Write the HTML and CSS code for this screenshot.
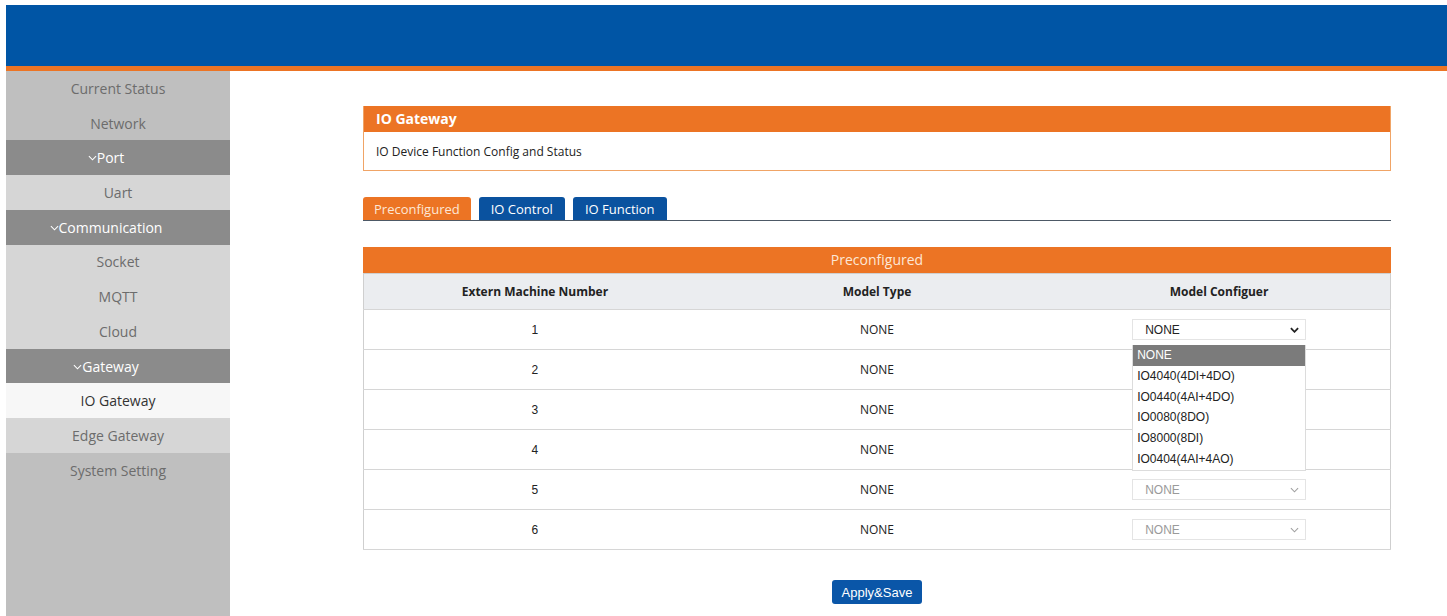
FILE: index.html
```html
<!DOCTYPE html>
<html lang="en">
<head>
<meta charset="utf-8">
<title>IO Gateway</title>
<link rel="stylesheet" href="styles.css">
</head>
<body>
<div class="topbar"></div>
<div class="layout">
  <nav class="sidebar">
    <a class="nav-item top">Current Status</a>
    <a class="nav-item top">Network</a>
    <a class="nav-item group"><svg class="caret" viewBox="0 0 10 6" width="9" height="6"><polyline points="1,1 5,5 9,1" fill="none" stroke="currentColor" stroke-width="1.2"/></svg>Port</a>
    <a class="nav-item sub">Uart</a>
    <a class="nav-item group"><svg class="caret" viewBox="0 0 10 6" width="9" height="6"><polyline points="1,1 5,5 9,1" fill="none" stroke="currentColor" stroke-width="1.2"/></svg>Communication</a>
    <a class="nav-item sub">Socket</a>
    <a class="nav-item sub">MQTT</a>
    <a class="nav-item sub">Cloud</a>
    <a class="nav-item group"><svg class="caret" viewBox="0 0 10 6" width="9" height="6"><polyline points="1,1 5,5 9,1" fill="none" stroke="currentColor" stroke-width="1.2"/></svg>Gateway</a>
    <a class="nav-item sub active">IO Gateway</a>
    <a class="nav-item sub">Edge Gateway</a>
    <a class="nav-item top">System Setting</a>
  </nav>

  <main class="content">
    <section class="panel">
      <h2 class="panel-title">IO Gateway</h2>
      <p class="panel-body">IO Device Function Config and Status</p>
    </section>

    <div class="tabs">
      <span class="tab current">Preconfigured</span>
      <span class="tab">IO Control</span>
      <span class="tab">IO Function</span>
    </div>

    <table class="grid">
      <caption>Preconfigured</caption>
      <thead>
        <tr><th>Extern Machine Number</th><th>Model Type</th><th>Model Configuer</th></tr>
      </thead>
      <tbody>
        <tr>
          <td class="num">1</td><td>NONE</td>
          <td>
            <div class="pick-wrap">
              <div class="pick open">NONE<svg class="chev" viewBox="0 0 10 6" width="9" height="6"><polyline points="1,1 5,5 9,1" fill="none" stroke="currentColor" stroke-width="2"/></svg></div>
              <ul class="options">
                <li class="hl">NONE</li>
                <li>IO4040(4DI+4DO)</li>
                <li>IO0440(4AI+4DO)</li>
                <li>IO0080(8DO)</li>
                <li>IO8000(8DI)</li>
                <li>IO0404(4AI+4AO)</li>
              </ul>
            </div>
          </td>
        </tr>
        <tr><td class="num">2</td><td>NONE</td><td><div class="pick off covered">NONE<svg class="chev" viewBox="0 0 10 6" width="9" height="6"><polyline points="1,1 5,5 9,1" fill="none" stroke="currentColor" stroke-width="1.2"/></svg></div></td></tr>
        <tr><td class="num">3</td><td>NONE</td><td><div class="pick off covered">NONE<svg class="chev" viewBox="0 0 10 6" width="9" height="6"><polyline points="1,1 5,5 9,1" fill="none" stroke="currentColor" stroke-width="1.2"/></svg></div></td></tr>
        <tr><td class="num">4</td><td>NONE</td><td><div class="pick off covered">NONE<svg class="chev" viewBox="0 0 10 6" width="9" height="6"><polyline points="1,1 5,5 9,1" fill="none" stroke="currentColor" stroke-width="1.2"/></svg></div></td></tr>
        <tr><td class="num">5</td><td>NONE</td><td><div class="pick off">NONE<svg class="chev" viewBox="0 0 10 6" width="9" height="6"><polyline points="1,1 5,5 9,1" fill="none" stroke="currentColor" stroke-width="1.2"/></svg></div></td></tr>
        <tr><td class="num">6</td><td>NONE</td><td><div class="pick off">NONE<svg class="chev" viewBox="0 0 10 6" width="9" height="6"><polyline points="1,1 5,5 9,1" fill="none" stroke="currentColor" stroke-width="1.2"/></svg></div></td></tr>
      </tbody>
    </table>

    <div class="actions">
      <button class="btn" type="button">Apply&amp;Save</button>
    </div>
  </main>
</div>
</body>
</html>
```
FILE: styles.css
```css
html, body {
  margin: 0;
  height: 100%;
  background: #fff;
}

body {
  padding: 5px 0 0 6px;
  box-sizing: border-box;
  font-family: "Open Sans", "Noto Sans", sans-serif;
  overflow: hidden;
}

/* header band */
.topbar {
  height: 61px;
  background: #0055a5;
  border-bottom: 5px solid #ec7424;
}

.layout {
  display: flex;
  height: calc(100% - 66px);
}

/* left navigation */
.sidebar {
  width: 224px;
  flex: none;
  background: #bfbfbf;
  display: flex;
  flex-direction: column;
}

.nav-item {
  display: flex;
  align-items: center;
  justify-content: center;
  height: 34.73px;
  font-size: 14px;
  color: #6c6c6c;
  cursor: pointer;
}

.nav-item.top { background: #bfbfbf; }
.nav-item.sub { background: #d6d6d6; }
.nav-item.group { background: #8b8b8b; color: #fff; padding-right: 24px; }
.nav-item.active { background: #f7f7f7; color: #333; }

.caret {
  margin-right: 0;
  margin-top: 1px;
}

/* main area */
.content {
  flex: 1;
  padding: 35px 56px 0 133px;
}

.panel {
  border: 1px solid #f0a466;
  border-top: 0;
}

.panel-title {
  margin: 0;
  height: 26px;
  line-height: 26px;
  padding-left: 12px;
  background: #ec7424;
  color: #fff;
  font-size: 14px;
  font-weight: 700;
}

.panel-body {
  margin: 0;
  height: 38px;
  line-height: 40px;
  padding-left: 12px;
  font-size: 12px;
  color: #222;
}

/* tabs */
.tabs {
  display: flex;
  gap: 8px;
  margin-top: 26px;
  border-bottom: 1px solid #4d5966;
}

.tab {
  height: 23px;
  line-height: 24px;
  padding: 0 12px;
  border-radius: 3px 3px 0 0;
  background: #0a529f;
  color: #fff;
  font-size: 13px;
}

.tab.current {
  padding: 0 11px;
  background: #ec7424;
  color: #fde7d6;
}

/* preconfigured table */
.grid {
  width: 100%;
  margin-top: 26px;
  border-collapse: collapse;
  border: 1px solid #cfcfcf;
  table-layout: fixed;
  font-size: 12px;
}

.grid caption {
  height: 26px;
  line-height: 26px;
  background: #ec7424;
  color: #fde7d6;
  font-size: 14px;
}

.grid th {
  height: 35px;
  padding: 0;
  background: #ebedf0;
  color: #222;
  font-weight: 700;
  border-bottom: 1px solid #d6d6d6;
}

.grid td {
  height: 39px;
  padding: 0;
  text-align: center;
  color: #222;
  border-bottom: 1px solid #d6d6d6;
}

.grid td.num {
  font-family: "Liberation Sans", Arial, sans-serif;
}

.pick-wrap {
  position: relative;
  width: 174px;
  margin-left: 84px;
}

.pick {
  display: flex;
  align-items: center;
  justify-content: space-between;
  box-sizing: border-box;
  width: 174px;
  height: 21px;
  margin-left: 84px;
  padding: 0 6px 0 12px;
  border: 1px solid #e4e4e4;
  font-family: "Liberation Sans", Arial, sans-serif;
  font-size: 12px;
  color: #222;
  text-align: left;
}

.pick-wrap .pick { margin-left: 0; }

.pick.open .chev { color: #222; }
.pick.off { color: #9a9a9a; }
.pick.off .chev { color: #a0a0a0; }

/* selects hidden under the open option list */
.pick.covered { visibility: hidden; }

/* open option list, drawn over the rows below */
.options {
  position: absolute;
  left: 0;
  top: 26px;
  z-index: 2;
  width: 174px;
  box-sizing: border-box;
  margin: 0;
  padding: 0;
  list-style: none;
  background: #fff;
  border: 1px solid #dcdcdc;
  border-top: 0;
  text-align: left;
  font-family: "Liberation Sans", Arial, sans-serif;
  font-size: 12px;
  color: #222;
}

.options li {
  height: 20.8px;
  line-height: 20.8px;
  padding-left: 4px;
}

.options li.hl {
  background: #7b7b7b;
  color: #fff;
}

.actions {
  display: flex;
  justify-content: center;
  margin-top: 30px;
}

.btn {
  width: 90px;
  height: 24px;
  border: 0;
  border-radius: 3px;
  background: #0a56a8;
  color: #fff;
  font-family: "Liberation Sans", Arial, sans-serif;
  font-size: 13px;
  padding: 0;
}
```
